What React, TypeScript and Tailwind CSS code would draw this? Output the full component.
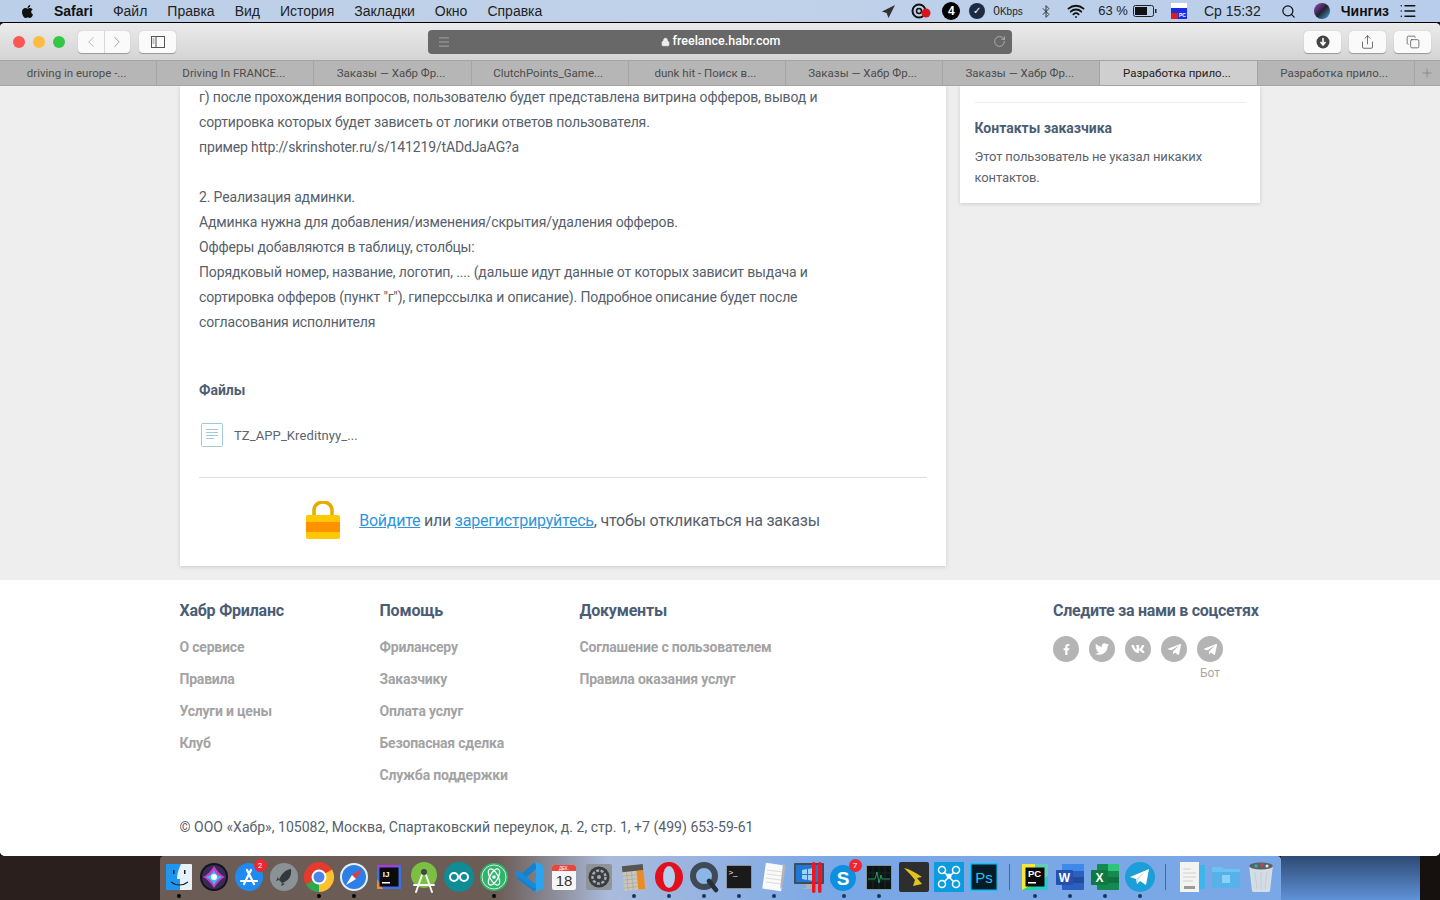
import { FaApple, FaFacebookF, FaTwitter, FaVk, FaTelegramPlane } from "react-icons/fa";
import { ChevronLeft, ChevronRight, RotateCw, Search, Bluetooth, Wifi, Share, Copy, Lock, Plus, Menu, List } from "lucide-react";

const tabs = [
  "driving in europe -...",
  "Driving In FRANCE...",
  "Заказы — Хабр Фр...",
  "ClutchPoints_Game...",
  "dunk hit - Поиск в...",
  "Заказы — Хабр Фр...",
  "Заказы — Хабр Фр...",
  "Разработка прило...",
  "Разработка прило...",
];

const menuItems = ["Файл", "Правка", "Вид", "История", "Закладки", "Окно", "Справка"];

const footerCols = [
  { title: "Хабр Фриланс", links: ["О сервисе", "Правила", "Услуги и цены", "Клуб"] },
  { title: "Помощь", links: ["Фрилансеру", "Заказчику", "Оплата услуг", "Безопасная сделка", "Служба поддержки"] },
  { title: "Документы", links: ["Соглашение с пользователем", "Правила оказания услуг"] },
];

const Sv = ({ children }: { children: React.ReactNode }) => (
  <svg viewBox="0 0 32 32" className="w-8 h-8">{children}</svg>
);

const T = ({ x, y, s, c, w = 700, children }: { x: number; y: number; s: number; c: string; w?: number; children: string }) => (
  <text x={x} y={y} fontSize={s} fill={c} fontWeight={w} fontFamily="Liberation Sans, sans-serif" textAnchor="middle">{children}</text>
);

const dockLeft = [
  { dot: true, icon: <Sv><rect x="3" y="3" width="26" height="26" rx="1" fill="#e9f1f8"/><path d="M3 3h15c-3 6-4 11-4 15h3v11H3z" fill="#1e96f0"/><path d="M8 21c5 4 12 4 17 0" stroke="#123" strokeWidth="1.2" fill="none"/><rect x="10" y="9" width="1.5" height="4" fill="#123"/><rect x="21" y="9" width="1.5" height="4" fill="#123"/></Sv> },
  { icon: <Sv><circle cx="16" cy="16" r="14" fill="#14141e"/><circle cx="16" cy="16" r="12" fill="#3a2a55"/><path d="M16 5c3 5 7 9 11 11-4 2-8 6-11 11-3-5-7-9-11-11 4-2 8-6 11-11z" fill="#c03fd0"/><path d="M16 9c1 4 4 6 8 7-4 2-6 4-8 8-2-4-4-6-8-8 4-1 6-3 8-7z" fill="#36c5e8"/><circle cx="16" cy="16" r="3" fill="#fff"/></Sv> },
  { badge: "2", icon: <Sv><circle cx="16" cy="16" r="14" fill="#1f8bf0"/><path d="M11 23l7-14M21 23l-7-14M8 20h16" stroke="#fff" strokeWidth="2.2" strokeLinecap="round"/></Sv> },
  { icon: <Sv><circle cx="16" cy="16" r="14" fill="#8b9296"/><path d="M23 8c-6 1-10 5-12 11l3 3c6-2 10-6 9-14z" fill="#33383c"/><path d="M11 19l-3 1 2-4zM14 22l-1 3 4-2z" fill="#33383c"/></Sv> },
  { dot: true, icon: <Sv><circle cx="16" cy="16" r="15" fill="#e33b2e"/><path d="M16 16L3 23.5A15 15 0 0 1 3.5 8z" fill="#e33b2e"/><path d="M16 16L29 8.5A15 15 0 0 1 16 31z" fill="#fbc02d"/><path d="M16 16L16 31A15 15 0 0 1 3 23.5z" fill="#2da94f"/><circle cx="16" cy="16" r="7.5" fill="#fff"/><circle cx="16" cy="16" r="5.5" fill="#4a86e8"/></Sv> },
  { dot: true, icon: <Sv><circle cx="16" cy="16" r="14" fill="#e8eef6"/><circle cx="16" cy="16" r="12" fill="#2c7fe6"/><path d="M24 8l-10 6 4 4z" fill="#f03a2e"/><path d="M8 24l10-6-4-4z" fill="#fff"/></Sv> },
  { icon: <Sv><rect x="4" y="4" width="24" height="24" fill="#3e6fe0"/><path d="M4 4h24l-10 4H4z" fill="#a13ee0"/><path d="M4 18l6 10H4z" fill="#f08a30"/><rect x="6.500" y="6.500" width="19" height="19" fill="#0b0b0b"/><T x={13} y={16} s={8} c="#fff">IJ</T><rect x="9" y="21" width="8" height="1.500" fill="#fff"/></Sv> },
  { icon: <Sv><circle cx="16" cy="14" r="13" fill="#7cc043"/><path d="M8 31l6-17M24 31l-6-17M6 24h20" stroke="#f4f6ef" strokeWidth="2" strokeLinecap="round"/><circle cx="16" cy="11" r="3" fill="#444"/></Sv> },
  { icon: <Sv><circle cx="16" cy="16" r="15" fill="#0f8c96"/><circle cx="11" cy="16" r="4" stroke="#fff" strokeWidth="2" fill="none"/><circle cx="21" cy="16" r="4" stroke="#fff" strokeWidth="2" fill="none"/></Sv> },
  { dot: true, icon: <Sv><circle cx="16" cy="16" r="14" fill="#2fb56a"/><circle cx="16" cy="16" r="12" fill="none" stroke="#cfeedd" strokeWidth="1"/><ellipse cx="16" cy="16" rx="9" ry="4" stroke="#fff" strokeWidth="1.300" fill="none" transform="rotate(60 16 16)"/><ellipse cx="16" cy="16" rx="9" ry="4" stroke="#fff" strokeWidth="1.300" fill="none" transform="rotate(-60 16 16)"/><circle cx="16" cy="16" r="1.800" fill="#fff"/></Sv> },
  { icon: <Sv><path d="M23 4L8 17l15 11" stroke="#1580cc" strokeWidth="6" fill="none"/><path d="M3 11l20 15" stroke="#1a8ad8" strokeWidth="4.500" fill="none"/><path d="M23 1l8 4v22l-8 4z" fill="#2aa4f0"/></Sv> },
  { icon: <Sv><rect x="4" y="4" width="24" height="25" rx="2" fill="#f6f6f6"/><path d="M4 6a2 2 0 0 1 2-2h20a2 2 0 0 1 2 2v4H4z" fill="#e8453c"/><T x={16} y={9} s={4.500} c="#fff" w={400}>ДЕК.</T><T x={16} y={25} s={15} c="#333" w={400}>18</T></Sv> },
  { icon: <Sv><rect x="3" y="3" width="26" height="26" rx="2" fill="#8e9498"/><circle cx="16" cy="16" r="10.500" fill="#3a3c40"/><circle cx="16" cy="16" r="6.500" fill="none" stroke="#a5a8ac" strokeWidth="2.500" strokeDasharray="3 1.500"/><circle cx="16" cy="16" r="2" fill="#a5a8ac"/></Sv> },
  { dot: true, icon: <Sv><g transform="rotate(-6 16 16)"><rect x="5" y="4" width="21" height="25" rx="1" fill="#c9c6bd"/><rect x="19" y="10" width="7" height="19" fill="#ee8a22"/><rect x="5" y="4" width="21" height="6" fill="#555"/><path d="M5 14h14M5 18h14M5 22h14M5 26h14M9 10v19M14 10v19" stroke="#a5a29a" strokeWidth="0.600"/></g></Sv> },
  { dot: true, icon: <Sv><ellipse cx="16" cy="16" rx="14" ry="15" fill="#e2101c"/><ellipse cx="16" cy="16" rx="6" ry="11" fill="#b3d0ee"/></Sv> },
  { dot: true, icon: <Sv><circle cx="16" cy="15" r="11" fill="none" stroke="#3e4a55" strokeWidth="6"/><circle cx="16" cy="15" r="7" fill="#8ab7e8"/><path d="M21 20l7 9" stroke="#25303a" strokeWidth="4.500" strokeLinecap="round"/></Sv> },
  { dot: true, icon: <Sv><rect x="3" y="4" width="26" height="24" rx="2" fill="#8d9196"/><rect x="4" y="5" width="24" height="22" fill="#1a1a1a"/><T x={10} y={14} s={8} c="#fff" w={400}>{">_"}</T></Sv> },
  { dot: true, icon: <Sv><rect x="6" y="3" width="19" height="26" fill="#fafafa" transform="rotate(8 16 16)"/><path d="M9 9l15 2M9 13l15 2M8 17l15 2M8 21l15 2" stroke="#d6d2d0" strokeWidth="0.800"/><path d="M25 3l3 1-4 22-2 2z" fill="#b3b3b3"/></Sv> },
  { icon: <Sv><rect x="1" y="2" width="30" height="21" rx="1" fill="#444b55"/><rect x="3" y="4" width="26" height="17" fill="#1d78d6"/><path d="M9 9l5-1v5H9zM15 8l6-1v6h-6zM9 14h5v5l-5-1zM15 14h6v6l-6-1z" fill="#9fd2f8"/><path d="M13 23h6v4h-6zM10 27h12v1H10z" fill="#aeb2b6"/><rect x="19" y="1" width="3.500" height="31" rx="1.700" fill="#ee1620"/><rect x="25" y="1" width="3.500" height="31" rx="1.700" fill="#ee1620"/></Sv> },
  { dot: true, badge: "7", icon: <Sv><circle cx="15" cy="17" r="13" fill="#0e90e0"/><T x={15} y={24} s={19} c="#fff">S</T></Sv> },
  { dot: true, icon: <Sv><rect x="3" y="4" width="26" height="25" rx="1" fill="#8a9196"/><rect x="4" y="5" width="24" height="23" fill="#0d1514"/><path d="M10 5v23M16 5v23M22 5v23M4 12h24M4 20h24" stroke="#1c3a32" strokeWidth="0.500"/><path d="M5 18h7l2-7 2 11 2-8 1 4h8" stroke="#2cb87a" strokeWidth="0.800" fill="none"/></Sv> },
  { icon: <Sv><rect x="1" y="1" width="30" height="30" rx="2" fill="#2e2e2e"/><path d="M6 7c6 1 12 5 18 9l-5 1 5 6-9 2 2-6-5-6z" fill="#e2c21c"/></Sv> },
  { icon: <Sv><rect x="1" y="1" width="30" height="30" fill="#0d9be0"/><circle cx="9" cy="9" r="3.500" fill="none" stroke="#fff" strokeWidth="1.500"/><circle cx="23" cy="9" r="3.500" fill="none" stroke="#fff" strokeWidth="1.500"/><circle cx="9" cy="23" r="3.500" fill="none" stroke="#fff" strokeWidth="1.500"/><circle cx="23" cy="23" r="3.500" fill="none" stroke="#fff" strokeWidth="1.500"/><path d="M11 11l10 10M21 11L11 21" stroke="#fff" strokeWidth="1.500"/><circle cx="16" cy="15" r="2.500" fill="#fff"/></Sv> },
  { icon: <Sv><rect x="2" y="2" width="28" height="28" fill="#00c8ff"/><rect x="3.500" y="3.500" width="25" height="25" fill="#051c28"/><T x={16} y={22} s={15} c="#20c4f4" w={400}>Ps</T></Sv> },
];

const dockMid = [
  { dot: true, icon: <Sv><rect x="3" y="3" width="26" height="26" fill="#21d789"/><path d="M3 3h26v12L3 29z" fill="#f5e63c"/><path d="M16 3h13v26H16z" fill="#27c6e6" opacity="0.700"/><rect x="6.500" y="6.500" width="19" height="19" fill="#0b0b0b"/><T x={15.500} y={16} s={9.500} c="#fff">PC</T><rect x="9" y="21" width="8" height="1.500" fill="#fff"/></Sv> },
  { dot: true, icon: <Sv><rect x="8" y="3" width="22" height="26" rx="1" fill="#2b5fc0"/><rect x="8" y="3" width="22" height="7" fill="#3f8ae8"/><rect x="8" y="16" width="22" height="6" fill="#1f4d9c"/><rect x="2" y="9" width="17" height="15" rx="1" fill="#2450b0"/><T x={10.500} y={21} s={12} c="#fff">W</T></Sv> },
  { dot: true, icon: <Sv><rect x="8" y="3" width="22" height="26" rx="1" fill="#158a50"/><rect x="19" y="3" width="11" height="7" fill="#2ec47a"/><rect x="19" y="16" width="11" height="6" fill="#107040"/><rect x="2" y="9" width="17" height="15" rx="1" fill="#0f7a40"/><T x={10.500} y={21} s={12} c="#fff">X</T></Sv> },
  { dot: true, icon: <Sv><circle cx="16" cy="16" r="15" fill="#1c9fd8"/><path d="M6 16l19-8-3 16-6-4-3 3-1-5z" fill="#fff"/><path d="M12 18l9-7-7 8 0 4z" fill="#c6dcec"/></Sv> },
];

const dockRight = [
  { icon: <Sv><rect x="14" y="4" width="16" height="24" fill="#3cb4ee"/><rect x="5" y="1" width="19" height="30" fill="#f3f3f1"/><path d="M8 8h8M8 12h13M8 16h13M8 20h10" stroke="#c2c2c2" strokeWidth="0.700"/><rect x="9" y="25" width="11" height="3" fill="#9a9a9a"/></Sv> },
  { icon: <Sv><path d="M2 7a1 1 0 0 1 1-1h9l2 2h15a1 1 0 0 1 1 1v17a1 1 0 0 1-1 1H3a1 1 0 0 1-1-1z" fill="#6cc2f2"/><path d="M2 11h28v15a1 1 0 0 1-1 1H3a1 1 0 0 1-1-1z" fill="#58b2ea"/><path d="M12 14h8v8h-8z" fill="#8bd0f6"/></Sv> },
  { icon: <Sv><path d="M4 4h24l-3 26a2 2 0 0 1-2 1H9a2 2 0 0 1-2-1z" fill="#d5dde4"/><ellipse cx="16" cy="5" rx="12" ry="3.500" fill="#59606a"/><circle cx="11" cy="5" r="1.800" fill="#2bb39a"/><circle cx="17" cy="4" r="1.800" fill="#c54b3e"/><circle cx="22" cy="5" r="1.500" fill="#e7e7e7"/><path d="M10 11l2 17M16 11v17M22 11l-2 17" stroke="#bcc6ce" strokeWidth="0.700"/></Sv> },
];

function DockSlot({ icon, dot, badge, dark }: { icon: React.ReactNode; dot?: boolean; badge?: string; dark?: boolean }) {
  return (
    <div className="relative w-[35px] flex flex-col items-center pt-[5px]">
      {icon}
      {badge && (
        <span className="absolute top-[3px] right-0 w-[13px] h-[13px] rounded-full bg-[#f0252f] text-white text-[8px] leading-[13px] text-center">
          {badge}
        </span>
      )}
      {dot && <span className={`absolute top-[38px] w-[4px] h-[4px] rounded-full ${dark ? "bg-black" : "bg-[#16365f]"}`} />}
    </div>
  );
}

export default function App() {
  return (
    <div className="w-[1440px] h-[900px] overflow-hidden flex flex-col bg-[#1a1212] font-['Roboto',sans-serif]">
      {/* menu bar */}
      <div className="h-[22px] shrink-0 flex items-center bg-gradient-to-r from-[#bccfe8] via-[#c0d2e9] to-[#b8cdeb] text-[#111] text-[14px] font-['Liberation_Sans',sans-serif]">
        <FaApple className="ml-[20px] w-[15px] h-[15px] text-[#111]" />
        <span className="ml-[19px] font-bold">Safari</span>
        <div className="ml-[20px] flex gap-[20px]">
          {menuItems.map((m) => (
            <span key={m} className="text-[#222]">{m}</span>
          ))}
        </div>
        <div className="ml-auto flex items-center pr-[22px]">
          <svg viewBox="0 0 16 16" className="w-[15px] h-[15px] mr-[15px]" fill="#333"><path d="M15 1L1 8l5 1.500L8 15z" /></svg>
          <svg viewBox="0 0 22 18" className="w-[22px] h-[18px] mr-[9px]"><circle cx="8" cy="9" r="6.500" fill="none" stroke="#111" strokeWidth="2" /><circle cx="8" cy="9" r="2.500" fill="none" stroke="#111" strokeWidth="1.500" /><circle cx="15" cy="11" r="4.500" fill="#d8141c" /></svg>
          <span className="w-[18px] h-[18px] rounded-full bg-black text-white text-[12px] font-bold leading-[18px] text-center mr-[9px]">4</span>
          <span className="w-[16px] h-[16px] rounded-full bg-[#1d2a44] text-white text-[10px] leading-[16px] text-center mr-[8px]">✓</span>
          <span className="text-[12px] text-[#222] w-[36px]">0<span className="text-[10px]">Kbps</span></span>
          <Bluetooth className="w-[14px] h-[15px] ml-[10px] text-[#222]" strokeWidth={1.500} />
          <Wifi className="w-[20px] h-[18px] ml-[13px] text-[#111]" strokeWidth={2.500} />
          <span className="ml-[12px] text-[13px] text-[#222]">63 %</span>
          <svg viewBox="0 0 24 12" className="w-[24px] h-[12px] ml-[5px]"><rect x="0.500" y="0.500" width="20" height="11" rx="2" fill="none" stroke="#222" /><rect x="2" y="2" width="12" height="8" fill="#111" /><rect x="22" y="4" width="1.500" height="4" fill="#222" /></svg>
          <div className="ml-[14px] w-[16px] h-[16px] flex flex-col relative">
            <div className="h-[5px] bg-white" />
            <div className="h-[5px] bg-[#1a2ee0]" />
            <div className="h-[6px] bg-[#e01a1a]" />
            <span className="absolute right-0 bottom-0 w-[9px] h-[7px] bg-[#1a2ee0] text-white text-[5px] leading-[7px] font-bold text-center">PC</span>
          </div>
          <span className="ml-[17px] text-[14px] text-[#222]">Ср 15:32</span>
          <Search className="ml-[20px] w-[15px] h-[15px] text-[#111]" strokeWidth={2} />
          <span className="ml-[18px] w-[16px] h-[16px] rounded-full bg-gradient-to-br from-[#b03bd0] via-[#223] to-[#35b0e8]" />
          <span className="ml-[11px] font-bold text-[14px] text-[#111]">Чингиз</span>
          <List className="ml-[9px] w-[20px] h-[18px] text-[#111]" strokeWidth={2} />
        </div>
      </div>

      {/* window */}
      <div className="flex-1 min-h-0 flex flex-col rounded-t-[5px] rounded-b-[5px] overflow-hidden border-t border-black bg-white">
        {/* toolbar */}
        <div className="h-[37px] shrink-0 flex items-center bg-gradient-to-b from-[#ebebeb] to-[#d4d4d4] relative">
          <div className="ml-[13px] flex gap-[8px]">
            <span className="w-[12px] h-[12px] rounded-full bg-[#fc5753]" />
            <span className="w-[12px] h-[12px] rounded-full bg-[#fdbc40]" />
            <span className="w-[12px] h-[12px] rounded-full bg-[#33c748]" />
          </div>
          <div className="ml-[13px] flex w-[52px] h-[22px] bg-[#fafafa] rounded-[4px] shadow-[0_0.5px_1px_rgba(0,0,0,0.3)]">
            <div className="flex-1 flex items-center justify-center border-r border-[#d8d8d8]"><ChevronLeft className="w-[18px] h-[18px] text-[#a0a0a0]" strokeWidth={1} /></div>
            <div className="flex-1 flex items-center justify-center"><ChevronRight className="w-[18px] h-[18px] text-[#808080]" strokeWidth={1} /></div>
          </div>
          <div className="ml-[9px] w-[37px] h-[22px] flex items-center justify-center bg-[#fafafa] rounded-[4px] shadow-[0_0.5px_1px_rgba(0,0,0,0.3)]">
            <svg viewBox="0 0 14 12" className="w-[14px] h-[12px]"><rect x="0.500" y="0.500" width="13" height="11" fill="none" stroke="#555" /><path d="M5 0v12" stroke="#555" /><path d="M1.500 3h2M1.500 5h2M1.500 7h2" stroke="#888" /></svg>
          </div>
          <div className="ml-[252px] w-[584px] h-[24px] rounded-[4px] bg-[#686868] flex items-center pl-[8px] pr-[6px]">
            <Menu className="w-[16px] h-[14px] text-[#d0d0d0]" strokeWidth={1} />
            <div className="flex-1 flex items-center justify-center gap-[3px] text-white text-[12.5px] font-medium pr-[4px]">
              <Lock className="w-[9px] h-[10px] text-[#eee]" fill="#eee" />
              <span>freelance.habr.com</span>
            </div>
            <RotateCw className="w-[13px] h-[13px] text-[#cfcfcf]" strokeWidth={1.200} />
          </div>
          <div className="ml-auto mr-[9px] flex gap-[8px]">
            <div className="w-[37px] h-[22px] flex items-center justify-center bg-[#fafafa] rounded-[4px] shadow-[0_0.5px_1px_rgba(0,0,0,0.3)]">
              <svg viewBox="0 0 14 14" className="w-[14px] h-[14px]"><circle cx="7" cy="7" r="6.500" fill="#444" /><path d="M7 3v6M4.500 7L7 10l2.500-3" stroke="#fff" strokeWidth="1.600" fill="none" /></svg>
            </div>
            <div className="w-[37px] h-[22px] flex items-center justify-center bg-[#fafafa] rounded-[4px] shadow-[0_0.5px_1px_rgba(0,0,0,0.3)]">
              <Share className="w-[15px] h-[16px] text-[#444]" strokeWidth={1.200} />
            </div>
            <div className="w-[37px] h-[22px] flex items-center justify-center bg-[#fafafa] rounded-[4px] shadow-[0_0.5px_1px_rgba(0,0,0,0.3)]">
              <Copy className="w-[14px] h-[14px] text-[#444]" strokeWidth={1.200} />
            </div>
          </div>
        </div>

        {/* tabs */}
        <div className="h-[26px] shrink-0 flex bg-[#b6b6b6] border-t border-b border-[#a5a5a5]">
          {tabs.map((t, i) => (
            <div
              key={i}
              className={
                i === 7
                  ? "w-[157.2px] flex items-center justify-center pt-[2px] pr-[3px] text-[11.5px] text-[#222] bg-[#cfcfcf] border-r border-[#a5a5a5]"
                  : "w-[157.2px] flex items-center justify-center pt-[2px] pr-[3px] text-[11.5px] text-[#4c4c4c] border-r border-[#a5a5a5]"
              }
            >
              {t}
            </div>
          ))}
          <div className="flex-1 flex items-center justify-center">
            <Plus className="w-[14px] h-[14px] text-[#6e6e6e]" strokeWidth={1} />
          </div>
        </div>

        {/* page */}
        <div className="h-[494px] shrink-0 bg-[#eeeeee] overflow-hidden flex gap-[14px] pl-[180px]">
          <div className="w-[766px] h-[480px] bg-white shadow-[0_1px_4px_rgba(0,0,0,0.15)] px-[19px] text-[14px] leading-[25px] text-[#56606b]">
            <div className="-mt-[1px] tracking-[-0.15px]">
              <p>г) после прохождения вопросов, пользователю будет представлена витрина офферов, вывод и</p>
              <p>сортировка которых будет зависеть от логики ответов пользователя.</p>
              <p>пример http://skrinshoter.ru/s/141219/tADdJaAG?a</p>
              <p className="mt-[25px]">2. Реализация админки.</p>
              <p>Админка нужна для добавления/изменения/скрытия/удаления офферов.</p>
              <p>Офферы добавляются в таблицу, столбцы:</p>
              <p>Порядковый номер, название, логотип, .... (дальше идут данные от которых зависит выдача и</p>
              <p>сортировка офферов (пункт "г"), гиперссылка и описание). Подробное описание будет после</p>
              <p>согласования исполнителя</p>
            </div>
            <h3 className="mt-[43px] font-bold text-[14px] text-[#4f5f73]">Файлы</h3>
            <div className="mt-[20px] flex items-center h-[24px]">
              <svg viewBox="0 0 22 24" className="ml-[2px] w-[22px] h-[24px]">
                <rect x="0.500" y="0.500" width="21" height="23" rx="1" fill="none" stroke="#a3c9d8" />
                <path d="M5 6.500h12M5 9.500h12M5 12.500h12M5 15.500h8" stroke="#a3c9d8" />
              </svg>
              <span className="ml-[11px] text-[13px] tracking-[0.1px] text-[#5b6470]">TZ_APP_Kreditnyy_...</span>
            </div>
            <div className="mt-[30px] border-t border-[#dddddd]" />
            <div className="mt-[22px] flex items-center justify-center h-[40px] text-[16px] tracking-[-0.23px] text-[#56606b]">
              <svg viewBox="0 0 34 38" className="w-[34px] h-[38px] mr-[19px]">
                <path d="M8 16V9a9 8 0 0 1 18 0v7" fill="none" stroke="#e6ac00" strokeWidth="3.500" />
                <rect x="0" y="14" width="34" height="24" rx="2" fill="#ffc800" />
                <rect x="0" y="21" width="34" height="10" fill="#ff9100" />
              </svg>
              <a className="text-[#2f96dc] underline">Войдите</a>
              <span>&nbsp;или&nbsp;</span>
              <a className="text-[#2f96dc] underline">зарегистрируйтесь</a>
              <span>, чтобы откликаться на заказы</span>
            </div>
          </div>
          <div className="w-[300px] h-[117px] bg-white shadow-[0_1px_4px_rgba(0,0,0,0.15)] px-[14.5px] pt-[16px]">
            <div className="border-t border-[#eeeeee]" />
            <h3 className="mt-[15px] font-bold text-[14px] leading-[20px] text-[#4a5d75]">Контакты заказчика</h3>
            <p className="mt-[8px] text-[13px] leading-[21px] tracking-[-0.13px] text-[#5b6470]">
              Этот пользователь не указал никаких
              <br />
              контактов.
            </p>
          </div>
        </div>

        {/* footer */}
        <div className="flex-1 min-h-0 bg-white pl-[179.5px] pr-[180px] pt-[21px]">
          <div className="flex h-[216px]">
            {footerCols.map((c) => (
              <div key={c.title} className="w-[200px]">
                <h4 className="font-bold text-[16px] leading-[20px] tracking-[-0.2px] text-[#4a5d75]">{c.title}</h4>
                <ul className="mt-[10px]">
                  {c.links.map((l) => (
                    <li key={l} className="h-[32px] leading-[32px] text-[14px] font-bold tracking-[-0.2px] text-[#a3a3a3] whitespace-nowrap">{l}</li>
                  ))}
                </ul>
              </div>
            ))}
            <div className="ml-auto w-[207px]">
              <h4 className="font-bold text-[16px] leading-[20px] tracking-[-0.3px] text-[#4a5d75] whitespace-nowrap">Следите за нами в соцсетях</h4>
              <div className="mt-[15px] flex gap-[10px] items-start">
                {[FaFacebookF, FaTwitter, FaVk, FaTelegramPlane].map((Icon, i) => (
                  <span key={i} className="w-[26px] h-[26px] rounded-full bg-[#b4b4b4] flex items-center justify-center text-white">
                    <Icon className={i === 0 ? "w-[11px] h-[11px]" : i === 3 ? "w-[15px] h-[15px]" : "w-[14px] h-[14px]"} />
                  </span>
                ))}
                <div className="flex flex-col items-center">
                  <span className="w-[26px] h-[26px] rounded-full bg-[#b4b4b4] flex items-center justify-center text-white">
                    <FaTelegramPlane className="w-[15px] h-[15px]" />
                  </span>
                  <span className="mt-[3px] text-[12px] leading-[16px] text-[#a8a8a8]">Бот</span>
                </div>
              </div>
            </div>
          </div>
          <p className="text-[14px] leading-[20px] tracking-[0.03px] text-[#56606b]">© ООО «Хабр», 105082, Москва, Спартаковский переулок, д. 2, стр. 1, +7 (499) 653-59-61</p>
        </div>
      </div>

      {/* desktop + dock */}
      <div className="h-[44px] shrink-0 flex">
        <div className="w-[160px] bg-[#2a1f1d]" />
        <div className="w-[1121px] rounded-t-[4px] flex pl-[1.5px] bg-gradient-to-r from-[#6b5c56] from-[30%] via-[#aabbdc] via-[40%] to-[#7aa8e6] to-[60%]">
          {dockLeft.map((d, i) => (
            <DockSlot key={i} {...d} dark={i < 11} />
          ))}
          <div className="w-[16px] flex justify-center pt-[8px]"><div className="w-px h-[26px] bg-[#3f6a9e]" /></div>
          {dockMid.map((d, i) => (
            <DockSlot key={i} {...d} />
          ))}
          <div className="w-[16px] flex justify-center pt-[8px]"><div className="w-px h-[26px] bg-[#3f6a9e]" /></div>
          {dockRight.map((d, i) => (
            <DockSlot key={i} {...d} />
          ))}
        </div>
        <div className="w-[139px] bg-gradient-to-b from-[#2f4a74] to-[#5f92d8]" />
        <div className="flex-1 bg-[#16100f]" />
      </div>
    </div>
  );
}
